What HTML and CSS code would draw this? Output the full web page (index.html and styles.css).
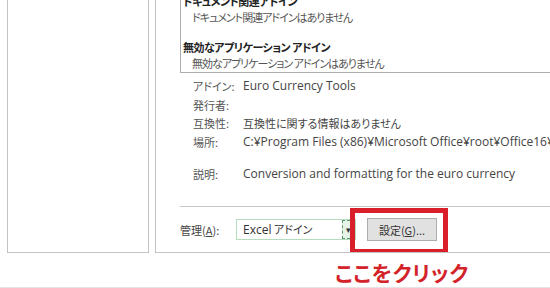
FILE: index.html
```html
<!DOCTYPE html>
<html lang="ja">
<head>
  <meta charset="UTF-8" />
  <title>アドイン</title>
  <link rel="stylesheet" href="styles.css">
</head>
<body>

  <section class="window">
    <!-- Left category pane -->
    <div class="left-pane"></div>

    <!-- Right add-in pane -->
    <div class="right-pane">
      <div class="addin-list">
        <div class="group-title">ドキュメント関連アドイン</div>
        <div class="group-item">ドキュメント関連アドインはありません</div>
        <div class="group-title gap">無効なアプリケーション アドイン</div>
        <div class="group-item">無効なアプリケーション アドインはありません</div>
      </div>

      <div class="details">
        <span class="label">アドイン:</span><span class="value latin">Euro Currency Tools</span>
        <span class="label">発行者:</span><span class="value"></span>
        <span class="label">互換性:</span><span class="value">互換性に関する情報はありません</span>
        <span class="label">場所:</span><span class="value latin">C:¥Program Files (x86)¥Microsoft Office¥root¥Office16¥</span>
        <span class="label spacer"></span><span class="value spacer"></span>
        <span class="label">説明:</span><span class="value latin">Conversion and formatting for the euro currency</span>
      </div>

      <div class="manage">
        <span class="manage-label">管理(<u>A</u>):</span>
        <div class="select">
          <span class="select-text"><span class="latin">Excel</span> アドイン</span>
          <span class="select-arrow">▾</span>
        </div>
        <div class="go-wrap">
          <button type="button" class="go-button">設定(<u>G</u>)...</button>
          <div class="highlight"></div>
        </div>
      </div>
    </div>
  </section>

  <p class="caption">ここをクリック</p>

</body>
</html>
```

FILE: styles.css
```css
/* Reset */
*, *::before, *::after {
  box-sizing: border-box;
}
body {
  font-family: "Noto Sans CJK JP", "Noto Sans", sans-serif;
  font-size: 11px;
  font-feature-settings: "palt";
  color: #444;
  background: #fff;
  margin: 0;
  width: 550px;
  height: 288px;
  overflow: hidden;
  border-bottom: 1px solid #e4e4e4;
}
.latin {
  font-family: "Open Sans", "Noto Sans", sans-serif;
  font-size: 12px;
  letter-spacing: 0;
}
.window {
  display: flex;
  gap: 6px;
  padding-left: 7px;
  height: 253px;
}
.left-pane {
  width: 142px;
  flex: none;
  border: 1px solid #c3c3c3;
  border-top: none;
}
.right-pane {
  width: 420px;
  flex: none;
  border: 1px solid #c3c3c3;
  border-top: none;
  border-right: none;
  padding-left: 24px;
  display: flex;
  flex-direction: column;
  overflow: hidden;
}
.addin-list {
  margin-top: -8px;
  height: 81px;
  border: 1px solid #adadad;
  border-right: none;
  padding: 0 0 0 2px;
  line-height: 16px;
  letter-spacing: -1px;
  color: #333;
  white-space: nowrap;
}
.group-title {
  font-weight: bold;
  color: #222;
  letter-spacing: -0.5px;
}
.group-title.gap {
  margin-top: 14px;
}
.group-item {
  padding-left: 9px;
  color: #555;
}
.details {
  display: grid;
  grid-template-columns: 50px 1fr;
  padding: 4px 0 0 13px;
  line-height: 18.5px;
  white-space: nowrap;
}
.details .label {
  color: #555;
}
.details .spacer {
  height: 14px;
}
.manage {
  margin-top: auto;
  border-top: 1px solid #c6c6c6;
  display: flex;
  align-items: center;
  height: 46px;
  color: #444;
}
.manage-label {
  width: 56px;
  flex: none;
}
.select {
  width: 120px;
  height: 21px;
  border: 1px solid #b5dcbd;
  display: flex;
  align-items: center;
  padding-left: 6px;
  color: #333;
}
.select-text {
  flex: 1;
}
.select-arrow {
  width: 13px;
  height: 19px;
  border: 1px dashed #5a9a68;
  background: #e6f3e8;
  font-size: 9px;
  line-height: 17px;
  text-align: center;
  color: #333;
}
.go-wrap {
  position: relative;
  margin-left: 11px;
}
.go-button {
  font-family: inherit;
  font-size: 11px;
  font-feature-settings: "palt";
  color: #333;
  width: 70px;
  height: 23px;
  padding: 0;
  background: #e1e1e1;
  border: 1px solid #adadad;
  border-radius: 0;
}
.go-button .latin {
  font-size: 11px;
}
/* Red annotation frame round the button */
.highlight {
  position: absolute;
  left: -17px;
  top: -10px;
  width: 98px;
  height: 46px;
  border: 5px solid #d9202a;
}
.caption {
  margin: 6px 0 0 0;
  padding-left: 335px;
  font-size: 21px;
  font-weight: bold;
  letter-spacing: 0.7px;
  color: #d32228;
  line-height: 26px;
}
```
